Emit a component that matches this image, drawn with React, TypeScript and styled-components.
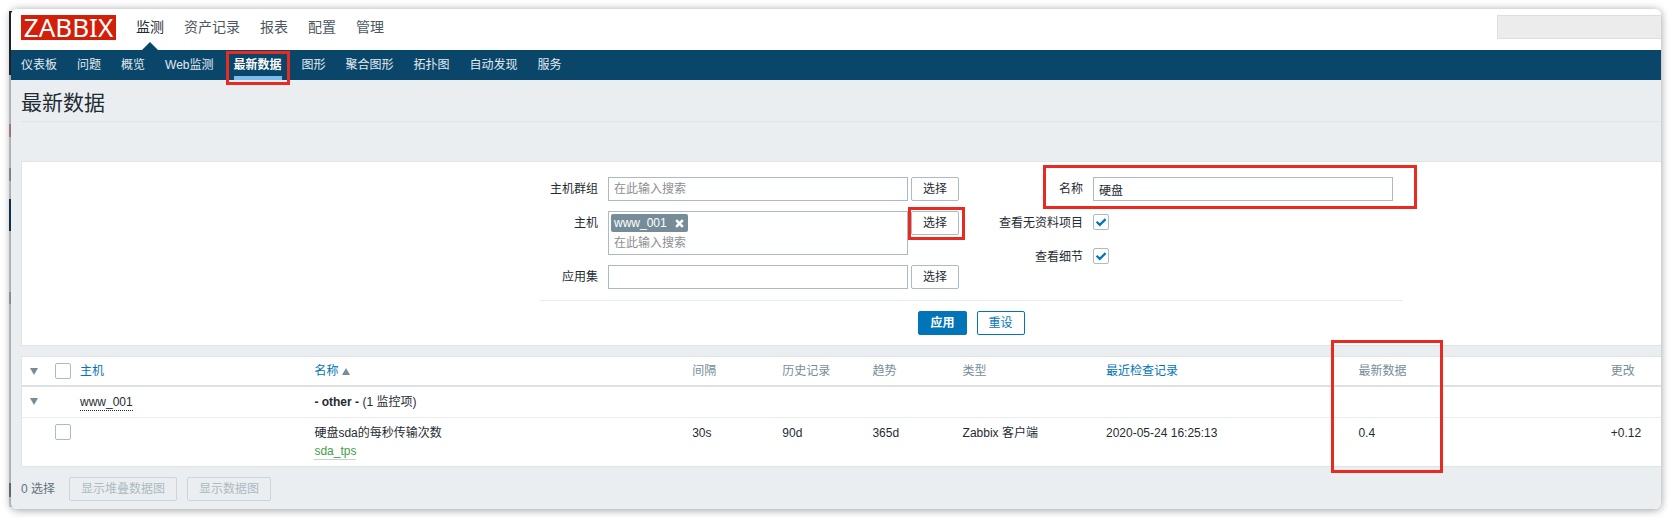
import React from "react";
import styled, { createGlobalStyle, css } from "styled-components";

const colors = {
  ink: "#1f2c33",
  muted: "#768d99",
  link: "#0275b8",
  navy: "#0a466a",
  page: "#ebeef0",
  line: "#dfe4e7",
  control: "#acbbc2",
  mark: "#e82a20",
};

const Global = createGlobalStyle`
  *, *::before, *::after { box-sizing: border-box; }
  body {
    margin: 0;
    background: #fff;
    color: ${colors.ink};
    font: 12px/18px "Liberation Sans", "Noto Sans CJK SC", sans-serif;
  }
  input, button { font: inherit; color: inherit; }
  a { color: inherit; text-decoration: none; }
`;

/* Red annotation frame drawn over the marked part */
const frame = css`
  content: "";
  position: absolute;
  border: 3px solid ${colors.mark};
  pointer-events: none;
  z-index: 2;
`;

const Stage = styled.div`
  position: relative;
  padding: 9px 9px 9px 11px;
`;

/* Sliver of the window that lies behind */
const BackWindow = styled.div`
  position: absolute;
  left: 9px;
  top: 11px;
  bottom: 11px;
  width: 4px;
  background: linear-gradient(
    #222a30 0 64px, #d3d6d8 64px 113px, #b98f8f 113px 126px, #d3d6d8 126px 157px,
    #9b9d9e 157px 170px, #d3d6d8 170px 188px, #173a56 188px 220px, #d3d6d8 220px 281px,
    #9fb0a6 281px 293px, #d3d6d8 293px 472px, #77797b 472px 486px, #d3d6d8 486px
  );
`;

const Window = styled.div`
  position: relative;
  overflow: hidden;
  border-radius: 6px;
  background: ${colors.page};
`;

const Shadow = styled.div`
  position: relative;
  border-radius: 6px;
  box-shadow: 0 1px 8px rgba(0, 0, 0, 0.4);
`;

const TopBar = styled.header`
  display: flex;
  align-items: flex-start;
  height: 41px;
  padding-left: 10px;
  background: #fff;
`;

const Logo = styled.a`
  width: 95px;
  height: 25px;
  margin-top: 6px;
  background: #d31f0a;
  color: #fff;
  font: 26px/25px "Noto Sans", sans-serif;
  text-align: center;
`;

const MainMenu = styled.nav`
  display: flex;
  flex: 1;
  padding-left: 10px;
`;

const MainLink = styled.a<{ $active?: boolean }>`
  position: relative;
  height: 41px;
  padding: 0 10px;
  font-size: 14px;
  line-height: 36px;
  color: ${(p) => (p.$active ? colors.ink : "#4c5860")};
  ${(p) =>
    p.$active &&
    css`
      &::after {
        content: "";
        position: absolute;
        left: 50%;
        bottom: 0;
        margin-left: -8px;
        border: 8px solid transparent;
        border-top: 0;
        border-bottom-color: ${colors.navy};
      }
    `}
`;

const Search = styled.input`
  width: 10%;
  height: 24px;
  margin-top: 6px;
  border: 1px solid #dedede;
  border-right: 0;
  background: #ececec;
`;

const SubMenu = styled.nav`
  display: flex;
  gap: 20px;
  height: 30px;
  padding-left: 10px;
  background: ${colors.navy};
`;

const SubLink = styled.a<{ $active?: boolean }>`
  position: relative;
  height: 30px;
  line-height: 30px;
  color: #e3ebf0;
  white-space: nowrap;
  ${(p) =>
    p.$active &&
    css`
      color: #fff;
      font-weight: bold;
      box-shadow: inset 0 -4px #7dbdec;
      &::after {
        ${frame}
        inset: 1px -8px -5px;
      }
    `}
`;

const TitleBar = styled.div`
  height: 42px;
  margin: 0 0 39px 10px;
  border-bottom: 1px solid ${colors.line};
`;

const Title = styled.h1`
  margin: 0;
  font-size: 21px;
  font-weight: normal;
  line-height: 45px;
`;

const FilterCard = styled.section`
  display: grid;
  grid-template-columns: 518fr 863px 258fr;
  margin: 0 0 10px 10px;
  padding: 15px 0 10px;
  border: 1px solid ${colors.line};
  border-right: 0;
  background: #fff;
`;

const Form = styled.form`
  grid-column: 2;
`;

const Columns = styled.div`
  display: flex;
  padding: 0 10px 11px 0;
  border-bottom: 1px solid #e9edef;
`;

const Column = styled.div<{ $grow?: boolean }>`
  display: flex;
  flex-direction: column;
  gap: 10px;
  flex: ${(p) => (p.$grow ? 1 : "none")};
`;

const FormRow = styled.div<{ $marked?: boolean }>`
  position: relative;
  display: flex;
  align-items: flex-start;
  min-height: 24px;
  ${(p) =>
    p.$marked &&
    css`
      &::after {
        ${frame}
        inset: -12px -24px -8px 84px;
      }
    `}
`;

const FieldLabel = styled.label<{ $wide?: boolean }>`
  width: ${(p) => (p.$wide ? 134 : 68)}px;
  padding-right: 10px;
  line-height: 24px;
  text-align: right;
  white-space: nowrap;
`;

const TextBox = styled.input`
  width: 300px;
  height: 24px;
  padding: 0 5px;
  border: 1px solid ${colors.control};
  border-radius: 0;
  background: #fff;
  outline: 0;
  &::placeholder { color: #8e8e8e; opacity: 1; }
`;

const MultiBox = styled.div`
  display: flex;
  flex-direction: column;
  align-items: flex-start;
  justify-content: space-between;
  width: 300px;
  height: 44px;
  padding: 2px 2px 1px;
  border: 1px solid ${colors.control};
  background: #fff;
`;

const BareInput = styled.input`
  display: block;
  width: 100%;
  height: 20px;
  padding: 0 3px;
  border: 0;
  background: none;
  outline: 0;
  &::placeholder { color: #8e8e8e; opacity: 1; }
`;

const Chip = styled.span`
  display: flex;
  align-items: center;
  gap: 8px;
  height: 18px;
  padding: 0 4px 0 3px;
  border-radius: 2px;
  background: ${colors.muted};
  color: #fff;
`;

const ChipRemove = styled.button`
  display: flex;
  padding: 0;
  border: 0;
  background: none;
`;

const Button = styled.button<{ $kind?: "primary" | "outline" }>`
  height: 24px;
  padding: 0 11px;
  border: 1px solid ${colors.control};
  border-radius: 2px;
  background: #fff;
  line-height: 22px;
  white-space: nowrap;
  &:disabled {
    border-color: #ccd5d9;
    background: ${colors.page};
    color: #acbbc2;
  }
  ${(p) =>
    p.$kind &&
    css`
      border-color: ${colors.link};
      color: ${colors.link};
    `}
  ${(p) =>
    p.$kind === "primary" &&
    css`
      background: ${colors.link};
      color: #fff;
      font-weight: bold;
    `}
`;

const PickSlot = styled.span<{ $marked?: boolean }>`
  position: relative;
  display: flex;
  margin-left: 3px;
  ${(p) =>
    p.$marked &&
    css`
      &::after {
        ${frame}
        inset: -4px -6px -5px -3px;
      }
    `}
`;

const FormActions = styled.div`
  display: flex;
  justify-content: center;
  gap: 10px;
  padding-top: 10px;
`;

const CheckWrap = styled.span<{ $inRow?: boolean }>`
  position: relative;
  display: block;
  width: 16px;
  height: 16px;
  margin-top: ${(p) => (p.$inRow ? 3 : 0)}px;
  svg {
    position: absolute;
    inset: 0;
    pointer-events: none;
  }
  input:not(:checked) + svg { display: none; }
`;

const CheckInput = styled.input`
  appearance: none;
  display: block;
  width: 16px;
  height: 16px;
  margin: 0;
  border: 1px solid ${colors.control};
  border-radius: 2px;
  background: #fff;
`;

const DataTable = styled.table`
  width: calc(100% - 10px);
  margin-left: 10px;
  border-collapse: separate;
  border-spacing: 0;
  table-layout: fixed;
  border: solid ${colors.line};
  border-width: 1px 0 1px 1px;
  background: #fff;
`;

const Th = styled.th<{ $marked?: boolean }>`
  position: relative;
  height: 30px;
  padding: 0 5px;
  border-bottom: 2px solid #dce2e5;
  color: ${colors.muted};
  font-weight: normal;
  text-align: left;
  white-space: nowrap;
  a { color: ${colors.link}; }
  ${(p) =>
    p.$marked &&
    css`
      &::after {
        ${frame}
        top: -17px;
        left: -22px;
        width: 112px;
        height: 133px;
      }
    `}
`;

const Td = styled.td`
  padding: 6px 5px;
  vertical-align: top;
  white-space: nowrap;
  tr:not(:last-child) > & { border-bottom: 1px solid ${colors.page}; }
`;

const Toggle = styled.button`
  display: flex;
  align-items: center;
  height: 16px;
  padding: 0 3px;
  border: 0;
  background: none;
`;

const HostLink = styled.a`
  display: inline-block;
  line-height: 16px;
  border-bottom: 1px dotted ${colors.ink};
`;

const KeyLink = styled.a`
  display: inline-block;
  line-height: 16px;
  border-bottom: 1px solid #c3d3c4;
  color: #429e47;
`;

const SortArrow = styled.svg`
  margin-left: 4px;
`;

const Footer = styled.footer`
  display: flex;
  align-items: center;
  gap: 10px;
  padding: 10px 0 8px 10px;
  color: ${colors.muted};
`;

const Count = styled.span`
  margin-right: 4px;
  color: #5f727c;
`;

const DownArrow = () => (
  <svg width="8" height="7" viewBox="0 0 8 7" aria-hidden="true">
    <path d="M0 0h8L4 7z" fill={colors.muted} />
  </svg>
);

type CheckProps = { id?: string; checked?: boolean; label?: string; inRow?: boolean };

const Check = ({ id, checked, label, inRow }: CheckProps) => (
  <CheckWrap $inRow={inRow}>
    <CheckInput id={id} type="checkbox" defaultChecked={checked} aria-label={label} />
    <svg width="16" height="16" viewBox="0 0 16 16" aria-hidden="true">
      <path d="M3.6 7.8l3.2 3.1 5.8-5.8" fill="none" stroke={colors.link} strokeWidth="2.2" />
    </svg>
  </CheckWrap>
);

const mainItems = ["监测", "资产记录", "报表", "配置", "管理"];
const subItems = ["仪表板", "问题", "概览", "Web监测", "最新数据", "图形", "聚合图形", "拓扑图", "自动发现", "服务"];
const columnWidths = ["28px", "25px", "14.3%", "23.05%", "5.5%", "5.5%", "5.5%", "8.75%", "15.4%", "15.4%", "auto"];

export default function App() {
  return (
    <>
      <Global />
      <Stage>
        <BackWindow />
        <Shadow>
          <Window>
            <TopBar>
              <Logo href="#">ZABBIX</Logo>
              <MainMenu>
                {mainItems.map((t) => (
                  <MainLink key={t} href="#" $active={t === "监测"}>{t}</MainLink>
                ))}
              </MainMenu>
              <Search type="text" disabled aria-label="搜索" />
            </TopBar>
            <SubMenu>
              {subItems.map((t) => (
                <SubLink key={t} href="#" $active={t === "最新数据"}>{t}</SubLink>
              ))}
            </SubMenu>

            <main>
              <TitleBar>
                <Title>最新数据</Title>
              </TitleBar>

              <FilterCard>
                <Form onSubmit={(e) => e.preventDefault()}>
                  <Columns>
                    <Column>
                      <FormRow>
                        <FieldLabel htmlFor="groups">主机群组</FieldLabel>
                        <TextBox id="groups" placeholder="在此输入搜索" />
                        <PickSlot><Button type="button">选择</Button></PickSlot>
                      </FormRow>
                      <FormRow>
                        <FieldLabel htmlFor="hosts">主机</FieldLabel>
                        <MultiBox>
                          <Chip>
                            www_001
                            <ChipRemove type="button" aria-label="移除">
                              <svg width="9" height="9" viewBox="0 0 9 9" aria-hidden="true">
                                <path d="M1.2 1.2l6.6 6.6M7.8 1.2L1.2 7.8" stroke="#fff" strokeWidth="2.6" />
                              </svg>
                            </ChipRemove>
                          </Chip>
                          <BareInput id="hosts" placeholder="在此输入搜索" />
                        </MultiBox>
                        <PickSlot $marked><Button type="button">选择</Button></PickSlot>
                      </FormRow>
                      <FormRow>
                        <FieldLabel htmlFor="apps">应用集</FieldLabel>
                        <TextBox id="apps" />
                        <PickSlot><Button type="button">选择</Button></PickSlot>
                      </FormRow>
                    </Column>
                    <Column $grow>
                      <FormRow $marked>
                        <FieldLabel $wide htmlFor="name">名称</FieldLabel>
                        <TextBox id="name" defaultValue="硬盘" />
                      </FormRow>
                      <FormRow>
                        <FieldLabel $wide htmlFor="empty">查看无资料项目</FieldLabel>
                        <Check id="empty" checked inRow />
                      </FormRow>
                      <FormRow>
                        <FieldLabel $wide htmlFor="details">查看细节</FieldLabel>
                        <Check id="details" checked inRow />
                      </FormRow>
                    </Column>
                  </Columns>
                  <FormActions>
                    <Button $kind="primary" type="submit">应用</Button>
                    <Button $kind="outline" type="reset">重设</Button>
                  </FormActions>
                </Form>
              </FilterCard>

              <DataTable>
                <colgroup>
                  {columnWidths.map((w, i) => <col key={i} style={{ width: w }} />)}
                </colgroup>
                <thead>
                  <tr>
                    <Th><Toggle aria-label="全部折叠"><DownArrow /></Toggle></Th>
                    <Th><Check label="全选" /></Th>
                    <Th><a href="#">主机</a></Th>
                    <Th>
                      <a href="#">名称</a>
                      <SortArrow width="8" height="7" viewBox="0 0 8 7" aria-hidden="true">
                        <path d="M0 7h8L4 0z" fill={colors.muted} />
                      </SortArrow>
                    </Th>
                    <Th>间隔</Th>
                    <Th>历史记录</Th>
                    <Th>趋势</Th>
                    <Th>类型</Th>
                    <Th><a href="#">最近检查记录</a></Th>
                    <Th $marked>最新数据</Th>
                    <Th>更改</Th>
                  </tr>
                </thead>
                <tbody>
                  <tr>
                    <Td><Toggle aria-label="折叠"><DownArrow /></Toggle></Td>
                    <Td />
                    <Td><HostLink href="#">www_001</HostLink></Td>
                    <Td colSpan={8}><b>- other -</b> (1 监控项)</Td>
                  </tr>
                  <tr>
                    <Td />
                    <Td><Check label="硬盘sda的每秒传输次数" /></Td>
                    <Td />
                    <Td>
                      硬盘sda的每秒传输次数
                      <br />
                      <KeyLink href="#">sda_tps</KeyLink>
                    </Td>
                    <Td>30s</Td>
                    <Td>90d</Td>
                    <Td>365d</Td>
                    <Td>Zabbix 客户端</Td>
                    <Td>2020-05-24 16:25:13</Td>
                    <Td>0.4</Td>
                    <Td>+0.12</Td>
                  </tr>
                </tbody>
              </DataTable>

              <Footer>
                <Count>0 选择</Count>
                <Button disabled>显示堆叠数据图</Button>
                <Button disabled>显示数据图</Button>
              </Footer>
            </main>
          </Window>
        </Shadow>
      </Stage>
    </>
  );
}
